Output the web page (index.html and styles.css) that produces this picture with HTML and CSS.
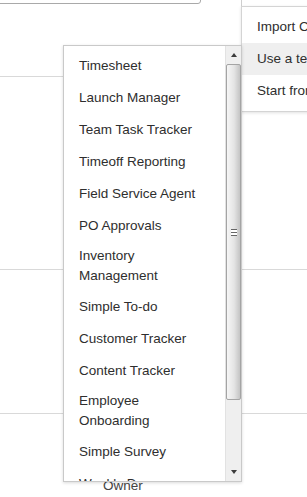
FILE: index.html
```html
<!DOCTYPE html>
<html lang="en">
<head>
    <meta charset="UTF-8">
    <title>Templates</title>
    <link rel="stylesheet" href="styles.css">
</head>
<body>
<div id="page">
    <div class="top-box"></div>
    <div class="row row-first"></div>
    <div class="row row-second"></div>
    <div class="row row-third"></div>
    <div class="col-head">Owner</div>

    <div class="top-btn"></div>
    <ul class="menu">
        <li>Import Contacts</li>
        <li class="hover">Use a template</li>
        <li>Start from scratch</li>
    </ul>

    <div class="dropdown">
        <ul class="list">
            <li>Timesheet</li>
            <li>Launch Manager</li>
            <li>Team Task Tracker</li>
            <li>Timeoff Reporting</li>
            <li>Field Service Agent</li>
            <li>PO Approvals</li>
            <li>Inventory Management</li>
            <li>Simple To-do</li>
            <li>Customer Tracker</li>
            <li>Content Tracker</li>
            <li>Employee Onboarding</li>
            <li>Simple Survey</li>
            <li>Weekly Demo</li>
        </ul>
        <div class="scroll">
            <div class="btn-up"><span class="arrow-up"></span></div>
            <div class="thumb"><span class="grip"></span></div>
            <div class="track"></div>
            <div class="btn-down"><span class="arrow-down"></span></div>
        </div>
    </div>
</div>
</body>
</html>
```

FILE: styles.css
```css
* {
    padding: 0;
    margin: 0;
}

body {
    font-family: "Liberation Sans", Arial, sans-serif;
    font-size: 13.5px;
    color: #2e2e2e;
    background: #ffffff;
}

#page {
    position: relative;
    height: 497px;
    overflow: hidden;
}

.top-box {
    width: 200px;
    height: 12px;
    margin-top: -10px;
    margin-left: -1px;
    border: 1px solid #a9a9a9;
    border-radius: 0 0 3px 0;
}

.row {
    border-bottom: 1px solid #d9d9d9;
}

.row-first {
    height: 72px;
}

.row-second {
    height: 192px;
}

.row-third {
    height: 143px;
}

.col-head {
    padding: 64px 0 0 103px;
    line-height: 16px;
    color: #444444;
}

.top-btn {
    position: absolute;
    left: 241px;
    top: -10px;
    width: 80px;
    height: 16px;
    border-left: 1px solid #cfcfcf;
}

.menu {
    position: absolute;
    left: 241px;
    top: 6px;
    width: 90px;
    height: 98px;
    padding: 4px 0 2px;
    list-style: none;
    background: #ffffff;
    border: 1px solid #d4d4d4;
    box-shadow: 0 1px 3px rgba(0, 0, 0, .12);
}

.menu li {
    height: 32px;
    line-height: 32px;
    padding-left: 15px;
    white-space: nowrap;
}

.menu .hover {
    background: #efefef;
}

.dropdown {
    position: absolute;
    left: 63px;
    top: 45px;
    width: 177px;
    height: 435px;
    display: flex;
    background: #ffffff;
    border: 1px solid #c9c9c9;
    box-shadow: 0 1px 3px rgba(0, 0, 0, .15);
}

.list {
    flex: 1;
    list-style: none;
    overflow: hidden;
    padding-top: 4px;
}

.list li {
    display: flex;
    align-items: center;
    box-sizing: border-box;
    min-height: 32px;
    padding: 4px 16px 5px 15px;
    line-height: 20px;
}

.scroll {
    width: 15px;
    display: flex;
    flex-direction: column;
    background: #efefef;
    border-left: 1px solid #e2e2e2;
}

.btn-up, .btn-down {
    height: 18px;
    display: flex;
    align-items: center;
    justify-content: center;
}

.arrow-up {
    border-left: 3px solid transparent;
    border-right: 3px solid transparent;
    border-bottom: 4px solid #3c3c3c;
}

.arrow-down {
    border-left: 3px solid transparent;
    border-right: 3px solid transparent;
    border-top: 4px solid #3c3c3c;
}

.thumb {
    height: 334px;
    display: flex;
    align-items: center;
    justify-content: center;
    border: 1px solid #a4a4a4;
    border-radius: 2px;
    background: linear-gradient(to right, #f6f6f6, #e4e4e4 55%, #c4c4c4);
}

.grip {
    width: 6px;
    height: 5px;
    border-top: 1px solid #666666;
    border-bottom: 1px solid #666666;
    background: linear-gradient(#ffffff 2px, #666666 2px, #666666 3px, #ffffff 3px);
}

.track {
    flex: 1;
}
```
